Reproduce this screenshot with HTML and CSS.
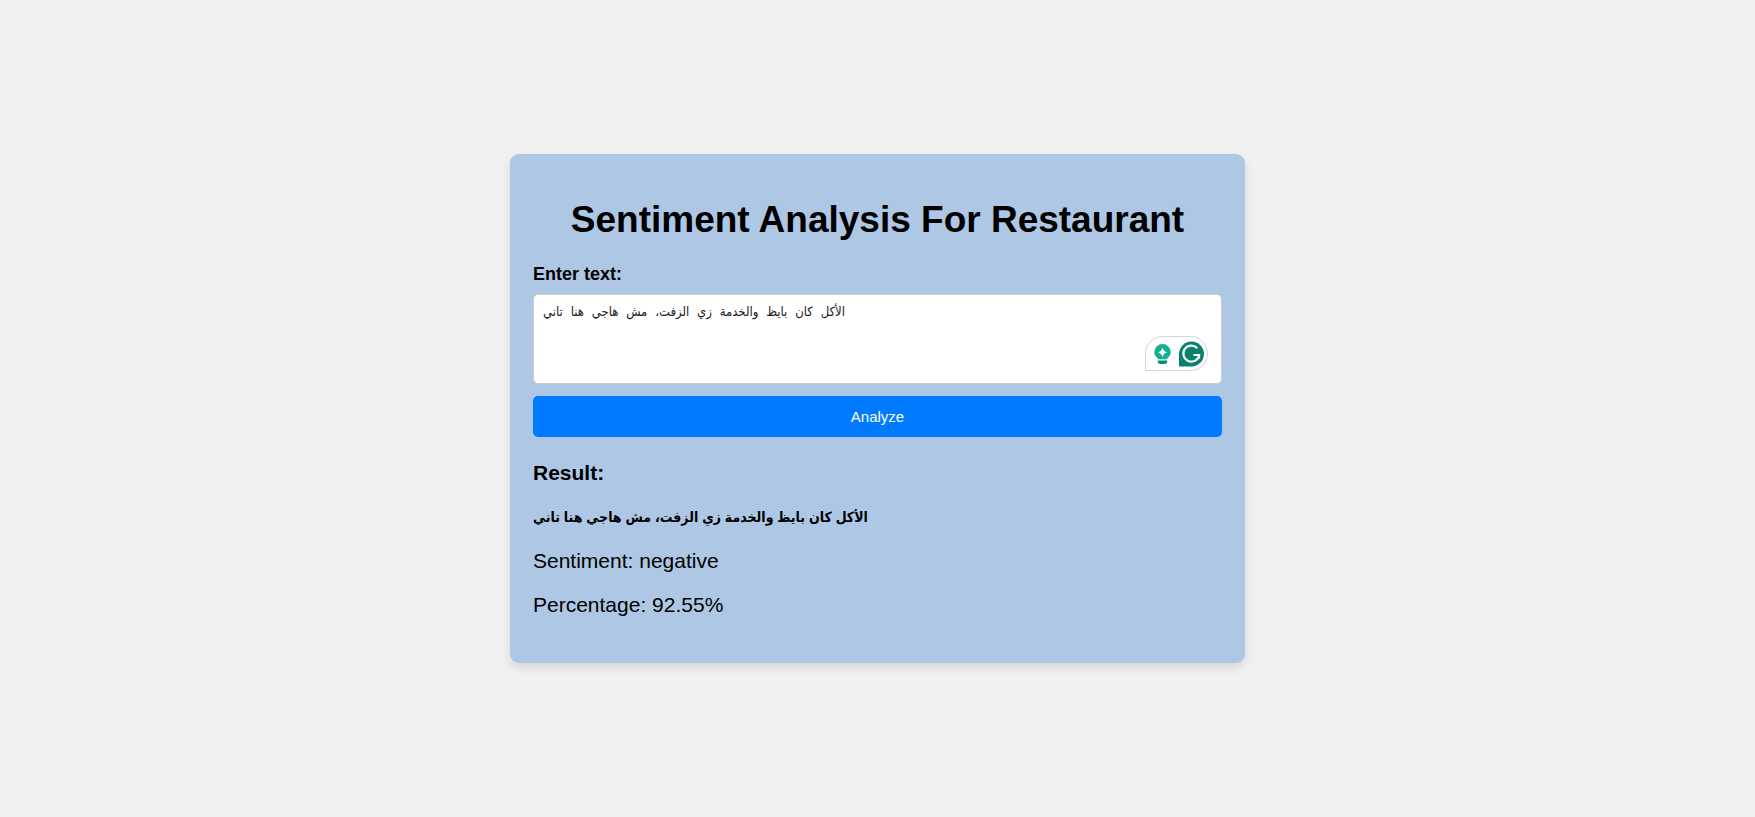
FILE: index.html
```html
<!DOCTYPE html>
<html lang="en">
<head>
<meta charset="utf-8">
<meta name="viewport" content="width=device-width, initial-scale=1">
<title>Sentiment Analysis For Restaurant</title>
<link rel="stylesheet" href="styles.css">
</head>
<body>
<main class="card">
  <h1 class="title">Sentiment Analysis For Restaurant</h1>
  <form class="form">
    <label class="label" for="text">Enter text:</label>
    <div class="field">
      <textarea class="input" id="text" name="text" spellcheck="false">الأكل كان بايظ والخدمة زي الزفت، مش هاجي هنا تاني</textarea>
      <div class="assistant">
        <svg class="bulb" viewBox="0 0 18 22" aria-hidden="true">
          <path fill="#10b094" d="M9 0.500a8.700 8.700 0 0 0-8.700 8.700c0 3 1.700 4.800 3.700 6.300v1h10v-1c2-1.500 3.700-3.300 3.700-6.300A8.700 8.700 0 0 0 9 0.500z"/>
          <path fill="#fff" d="M9 4Q9.900 8.300 14 9.200Q9.900 10.100 9 14.400Q8.100 10.100 4 9.200Q8.100 8.300 9 4z"/>
          <path fill="#0b8a75" d="M4 17.800h10v1a2.800 2.800 0 0 1-2.800 2.800H6.800A2.800 2.800 0 0 1 4 18.800z"/>
        </svg>
        <svg class="badge" viewBox="0 0 26 26" aria-hidden="true">
          <path fill="#0a806e" d="M13 0a13 13 0 1 1 0 26H0V13A13 13 0 0 1 13 0z"/>
          <path fill="none" stroke="#fff" stroke-width="2.200" d="M19 7A8.300 8.300 0 1 0 21 14H15M20.800 13V18"/>
        </svg>
      </div>
    </div>
    <button class="button" type="button">Analyze</button>
  </form>
  <section class="result">
    <h2 class="subtitle">Result:</h2>
    <p class="quote">الأكل كان بايظ والخدمة زي الزفت، مش هاجي هنا تاني</p>
    <p class="line">Sentiment: negative</p>
    <p class="line">Percentage: 92.55%</p>
  </section>
</main>
</body>
</html>
```
FILE: styles.css
```css
* {
  box-sizing: border-box;
}

body {
  margin: 0;
  min-height: 100vh;
  display: flex;
  align-items: center;
  justify-content: center;
  background: #f0f0f0;
  color: #000;
  font-family: "Liberation Sans", Arial, "DejaVu Sans", sans-serif;
}

.card {
  width: 100%;
  max-width: 735px;
  padding: 44px 23px 46px;
  border-radius: 9px;
  background: #adc7e4;
  box-shadow: 0 5px 9px rgba(0, 0, 0, 0.1);
}

.title {
  margin: 0 0 21px;
  font-size: 37px;
  line-height: 44px;
  text-align: center;
}

.form {
  display: flex;
  flex-direction: column;
}

.label {
  margin-bottom: 9px;
  font-size: 18px;
  line-height: 22px;
  font-weight: bold;
}

.field {
  position: relative;
  display: flex;
  margin-bottom: 12px;
}

.input {
  width: 100%;
  height: 90px;
  padding: 9px;
  border: 1px solid #ccc;
  border-radius: 5px;
  background: #fff;
  color: #222;
  font-family: "Liberation Mono", "DejaVu Sans Condensed", "DejaVu Sans", monospace;
  font-size: 13px;
  line-height: 18px;
  resize: none;
}

.assistant {
  position: absolute;
  right: 14px;
  bottom: 13px;
  display: flex;
  align-items: center;
  gap: 8px;
  height: 35px;
  padding: 0 3px 0 8px;
  border: 1px solid #d0d3e2;
  border-radius: 18px 18px 18px 0;
  background: #fff;
}

.bulb {
  width: 17px;
  height: 22px;
}

.badge {
  width: 25px;
  height: 26px;
}

.button {
  height: 41px;
  padding: 0;
  border: 0;
  border-radius: 5px;
  background: #007bff;
  color: #fff;
  font-family: inherit;
  font-size: 15px;
}

.result {
  display: flex;
  flex-direction: column;
  gap: 20px;
  margin-top: 24px;
}

.subtitle,
.quote,
.line {
  margin: 0;
  font-size: 21px;
  line-height: 24px;
}

.quote {
  font-family: "Liberation Sans", "DejaVu Sans Condensed", "DejaVu Sans", sans-serif;
  font-size: 14px;
  font-weight: bold;
}
```
